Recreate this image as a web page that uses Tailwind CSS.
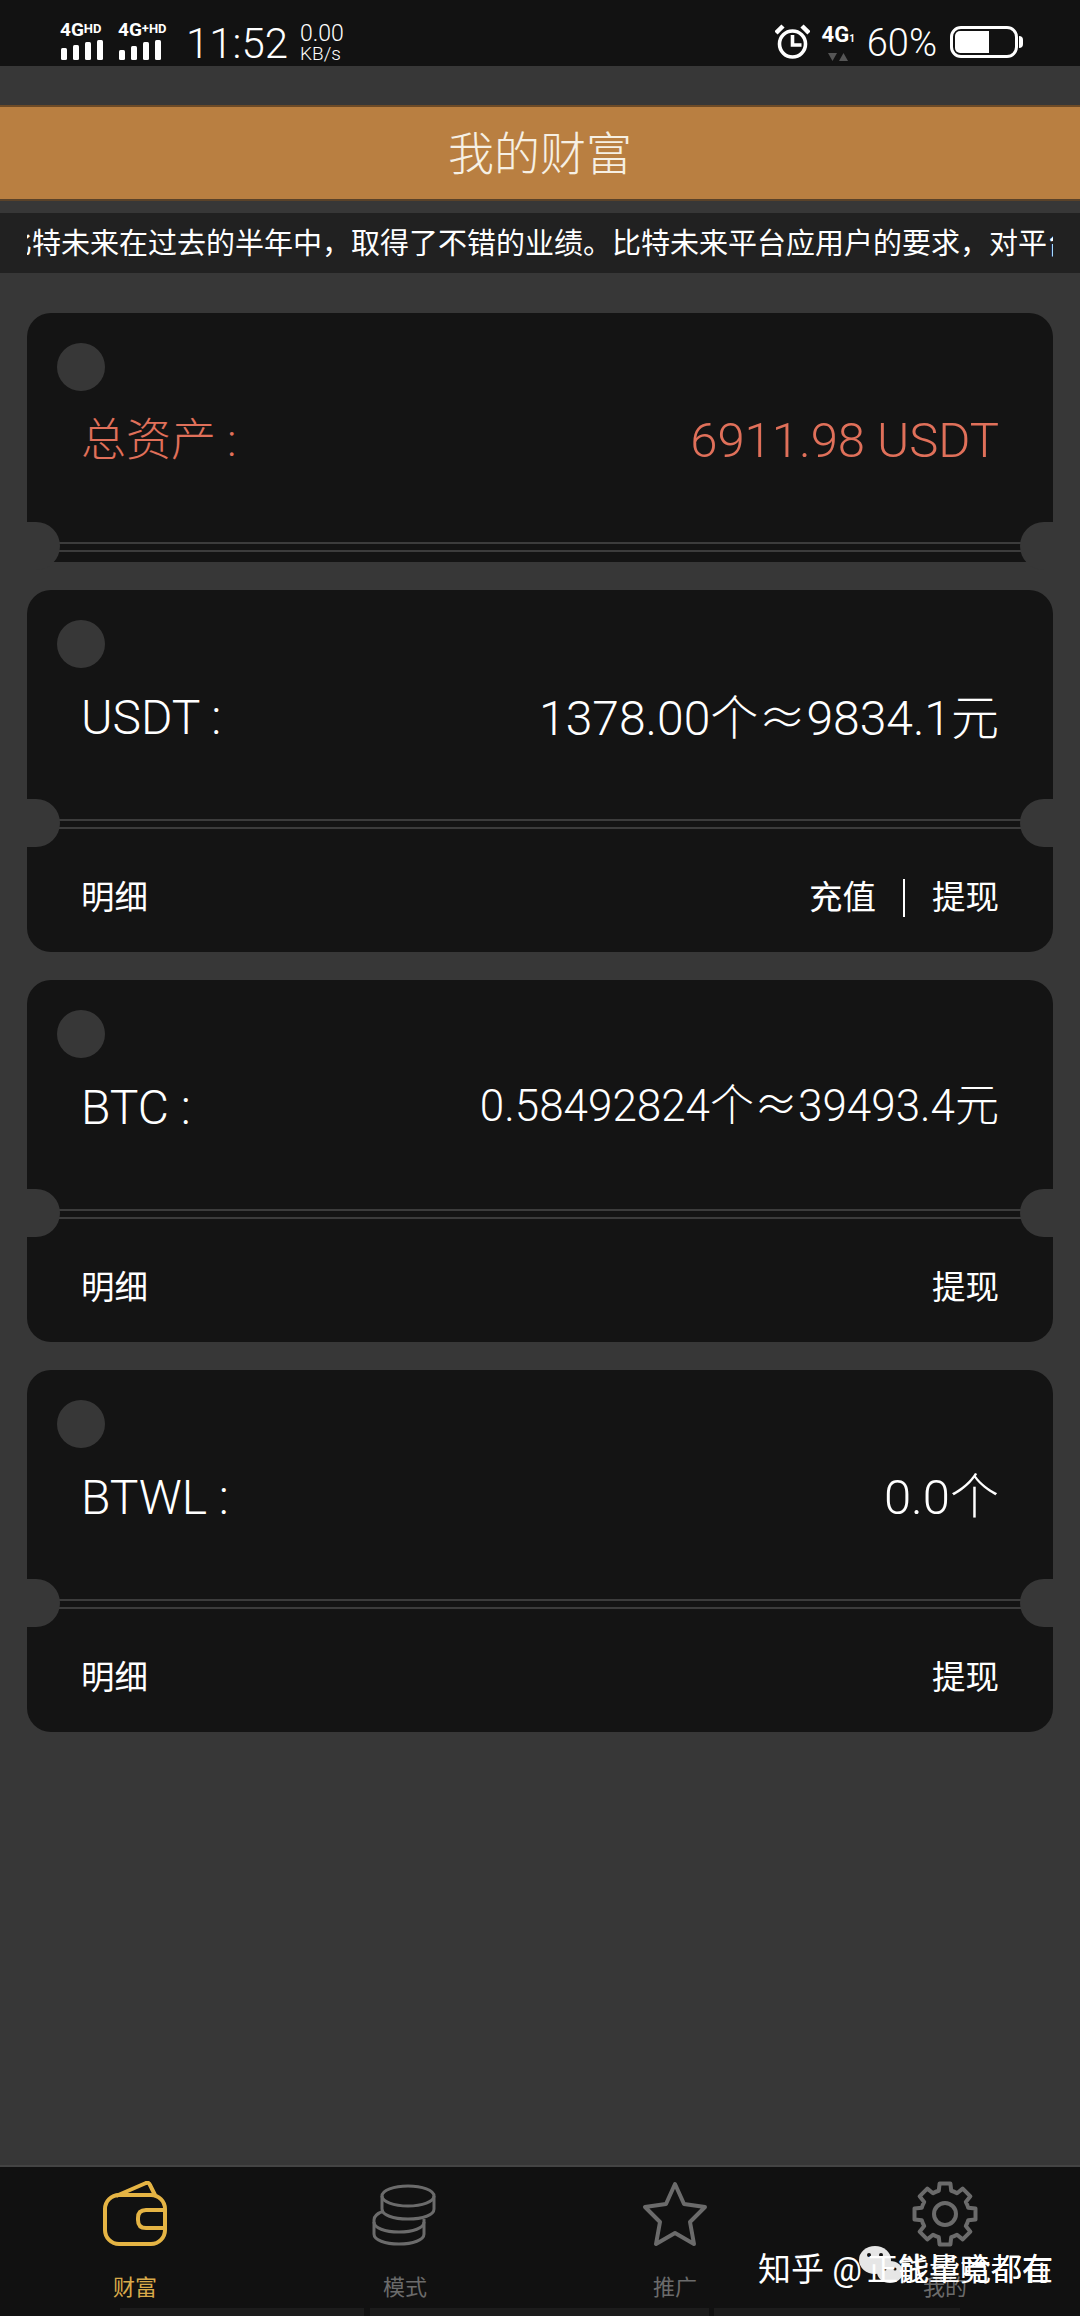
<!DOCTYPE html>
<html lang="zh-CN">
<head>
    <meta charset="UTF-8">
    <title>我的财富</title>
    <script src="https://cdn.jsdelivr.net/npm/@tailwindcss/browser@4"></script>
</head>
<body class="bg-[#373737] font-['Roboto','Noto_Sans_CJK_SC',sans-serif] text-white">
    <div class="relative flex flex-col h-[2316px] w-[1080px] overflow-hidden">
        <!-- Status bar -->
        <div class="flex justify-between h-[66px] bg-[#121212] pl-[60px] pr-[58px] shrink-0">
            <div class="flex items-start">
                <div class="flex flex-col w-[58px] pt-[20px]">
                    <span class="text-[19px] leading-[18px] font-bold whitespace-nowrap">4G<span class="text-[13px] align-[3px]">HD</span></span>
                    <svg class="mt-[1px]" width="44" height="20" viewBox="0 0 44 20" fill="#fff"><rect x="1" y="8" width="6" height="12" rx="1.5"/><rect x="13" y="5" width="6" height="15" rx="1.5"/><rect x="25" y="2" width="6" height="18" rx="1.5"/><rect x="37" y="0" width="6" height="20" rx="1.5"/></svg>
                </div>
                <div class="flex flex-col w-[68px] pt-[20px]">
                    <span class="text-[19px] leading-[18px] font-bold whitespace-nowrap">4G<span class="text-[13px] align-[3px]">+HD</span></span>
                    <svg class="mt-[1px]" width="44" height="20" viewBox="0 0 44 20" fill="#fff"><rect x="1" y="10" width="6" height="10" rx="1.5"/><rect x="13" y="6" width="6" height="14" rx="1.5"/><rect x="25" y="2" width="6" height="18" rx="1.5"/><rect x="37" y="0" width="6" height="20" rx="1.5"/></svg>
                </div>
                <span class="text-[42px] leading-[42px] font-light mt-[23px]">11:52</span>
                <div class="flex flex-col ml-[12px] mt-[24px]">
                    <span class="text-[23px] leading-[20px] font-light">0.00</span>
                    <span class="text-[19px] leading-[19px] font-light">KB/s</span>
                </div>
            </div>
            <div class="flex items-start">
                <svg class="mt-[24px]" width="35" height="35" viewBox="0 0 35 35" fill="none" stroke="#fff" stroke-width="3.6"><circle cx="17.5" cy="20" r="13"/><path d="M17.5 11v10h9"/><path d="M1 9l7-7M34 9l-7-7" stroke-width="4.5"/></svg>
                <div class="flex flex-col items-center ml-[11px] w-[35px] mt-[24px]">
                    <span class="text-[22px] leading-[22px] font-bold">4G<span class="text-[10px]">1</span></span>
                    <svg class="mt-[3px]" width="20" height="8" viewBox="0 0 20 8" fill="#555"><path d="M0 0h9l-4.5 8zM11 8h9l-4.5-8z"/></svg>
                </div>
                <span class="text-[38px] leading-[38px] font-light ml-[11px] mt-[24px]">60%</span>
                <div class="relative w-[68px] h-[32px] ml-[13px] mt-[26px] border-[3px] border-white rounded-[11px] p-[2px] mr-[4px]">
                    <div class="w-[34px] h-full bg-white rounded-l-[5px]"></div>
                    <div class="absolute right-[-8px] top-[7px] w-[4px] h-[12px] bg-white rounded-r"></div>
                </div>
            </div>
        </div>

        <!-- Title -->
        <div class="flex items-center justify-center h-[96px] mt-[39px] bg-[#b97f41] border-y-2 border-t-[#6d4a26] border-b-[#5a4229] shrink-0">
            <h1 class="text-[46px] font-light text-[#f6f0e4] leading-none mt-[2px]">我的财富</h1>
        </div>

        <!-- Notice -->
        <div class="flex items-center h-[60px] mt-[12px] bg-[#212121] shrink-0">
            <div class="mx-[27px] overflow-hidden w-full">
                <p class="text-[29px] leading-none mt-[3px] ml-[-24px] whitespace-nowrap">比特未来在过去的半年中，取得了不错的业绩。比特未来平台应用户的要求，对平台</p>
            </div>
        </div>

        <!-- Cards -->
        <div class="flex flex-col gap-[28px] px-[27px] pt-[40px]">
            <div class="relative h-[249px] bg-[#141414] rounded-t-[24px]">
                <div class="absolute left-[30px] top-[30px] w-[48px] h-[48px] rounded-full bg-[#373737]"></div>
                <div class="flex items-center justify-between h-[256px] px-[54px] font-light text-[#e0705a]">
                    <span class="text-[45px]">总资产 :</span>
                    <span class="text-[49px]">6911.98 USDT</span>
                </div>
                <div class="absolute left-[32px] right-[32px] top-[229px] h-[10px] border-y-2 border-[#3c3c3c]"></div>
                <div class="absolute left-[-27px] top-[209px] w-[60px] h-[48px] rounded-r-full bg-[#373737]"></div>
                <div class="absolute right-[-27px] top-[209px] w-[60px] h-[48px] rounded-l-full bg-[#373737]"></div>
            </div>

            <div class="relative h-[362px] bg-[#141414] rounded-[24px]">
                <div class="absolute left-[30px] top-[30px] w-[48px] h-[48px] rounded-full bg-[#373737]"></div>
                <div class="flex items-center justify-between h-[256px] px-[54px] text-[48px] font-light">
                    <span>USDT :</span>
                    <span class="mt-[-3px]">1378.00个<span class="font-['Noto_Sans_CJK_SC']">≈</span>9834.1元</span>
                </div>
                <div class="absolute left-[32px] right-[32px] top-[229px] h-[10px] border-y-2 border-[#3c3c3c]"></div>
                <div class="absolute left-[-27px] top-[209px] w-[60px] h-[48px] rounded-r-full bg-[#373737]"></div>
                <div class="absolute right-[-27px] top-[209px] w-[60px] h-[48px] rounded-l-full bg-[#373737]"></div>
                <div class="flex items-center justify-between px-[54px] pt-[27px] text-[33.5px]">
                    <span>明细</span>
                    <div class="flex items-center">
                        <span>充值</span>
                        <span class="w-[2px] h-[38px] bg-white mx-[27px]"></span>
                        <span>提现</span>
                    </div>
                </div>
            </div>

            <div class="relative h-[362px] bg-[#141414] rounded-[24px]">
                <div class="absolute left-[30px] top-[30px] w-[48px] h-[48px] rounded-full bg-[#373737]"></div>
                <div class="flex items-center justify-between h-[256px] px-[54px] text-[48px] font-light">
                    <span>BTC :</span>
                    <span class="text-[44px] mt-[-9px]">0.58492824个<span class="font-['Noto_Sans_CJK_SC']">≈</span>39493.4元</span>
                </div>
                <div class="absolute left-[32px] right-[32px] top-[229px] h-[10px] border-y-2 border-[#3c3c3c]"></div>
                <div class="absolute left-[-27px] top-[209px] w-[60px] h-[48px] rounded-r-full bg-[#373737]"></div>
                <div class="absolute right-[-27px] top-[209px] w-[60px] h-[48px] rounded-l-full bg-[#373737]"></div>
                <div class="flex items-center justify-between px-[54px] pt-[27px] text-[33.5px]">
                    <span>明细</span>
                    <span>提现</span>
                </div>
            </div>

            <div class="relative h-[362px] bg-[#141414] rounded-[24px]">
                <div class="absolute left-[30px] top-[30px] w-[48px] h-[48px] rounded-full bg-[#373737]"></div>
                <div class="flex items-center justify-between h-[256px] px-[54px] text-[48px] font-light">
                    <span>BTWL :</span>
                    <span class="text-[49px]">0.0个</span>
                </div>
                <div class="absolute left-[32px] right-[32px] top-[229px] h-[10px] border-y-2 border-[#3c3c3c]"></div>
                <div class="absolute left-[-27px] top-[209px] w-[60px] h-[48px] rounded-r-full bg-[#373737]"></div>
                <div class="absolute right-[-27px] top-[209px] w-[60px] h-[48px] rounded-l-full bg-[#373737]"></div>
                <div class="flex items-center justify-between px-[54px] pt-[27px] text-[33.5px]">
                    <span>明细</span>
                    <span>提现</span>
                </div>
            </div>
        </div>

        <!-- Tab bar -->
        <nav class="relative mt-auto grid grid-cols-4 h-[151px] bg-[#111111] border-t-2 border-[#444444] text-[22px] text-[#6b6b6b]">
            <div class="flex flex-col items-center pt-[14px]">
                <svg class="ml-[-1px]" width="66" height="66" viewBox="0 0 66 66" fill="none" stroke="#e5b444" stroke-width="4" stroke-linejoin="round">
                    <rect x="3" y="14" width="60" height="49" rx="14"/>
                    <path d="M14 15l30-13q3-1 4 2l5 10"/>
                    <path d="M63 29H44q-8 0-8 8v2q0 8 8 8h19"/>
                </svg>
                <span class="mt-[30px] leading-none text-[#d9aa4a]">财富</span>
            </div>
            <div class="flex flex-col items-center pt-[14px]">
                <svg width="66" height="66" viewBox="0 0 66 66" fill="none" stroke="#6b6b6b" stroke-width="3">
                    <ellipse cx="36" cy="15" rx="26" ry="10"/>
                    <path d="M10 15v13c0 6 11 10 26 10s26-4 26-10V15"/>
                    <path d="M12 30c-6 2-10 5-10 9v14c0 6 11 10 25 10s25-4 25-10V38"/>
                    <path d="M2 41c0 6 11 10 25 10s25-4 25-10"/>
                </svg>
                <span class="mt-[30px] leading-none">模式</span>
            </div>
            <div class="flex flex-col items-center pt-[14px]">
                <svg width="66" height="66" viewBox="0 0 66 66" fill="none" stroke="#6b6b6b" stroke-width="4" stroke-linejoin="round">
                    <path d="M33 3l9 20 21 3-15 15 4 22-19-11-19 11 4-22L3 26l21-3z"/>
                </svg>
                <span class="mt-[30px] leading-none">推广</span>
            </div>
            <div class="flex flex-col items-center pt-[14px]">
                <svg width="66" height="66" viewBox="0 0 66 66" fill="none" stroke="#6b6b6b" stroke-width="4" stroke-linejoin="round">
                    <circle cx="33" cy="33" r="11"/>
                    <path d="M26.8 9.8L27.6 2.5H38.4L39.2 9.8A24 24 0 0 1 45 12.2L50.7 7.6L58.4 15.3L53.8 21A24 24 0 0 1 56.2 26.8L63.5 27.6V38.4L56.2 39.2A24 24 0 0 1 53.8 45L58.4 50.7L50.7 58.4L45 53.8A24 24 0 0 1 39.2 56.2L38.4 63.5H27.6L26.8 56.2A24 24 0 0 1 21 53.8L15.3 58.4L7.6 50.7L12.2 45A24 24 0 0 1 9.8 39.2L2.5 38.4V27.6L9.8 26.8A24 24 0 0 1 12.2 21L7.6 15.3L15.3 7.6L21 12.2A24 24 0 0 1 26.8 9.8Z"/>
                </svg>
                <span class="mt-[30px] leading-none">我的</span>
            </div>
            <div class="absolute left-[120px] bottom-0 w-[244px] h-[8px] bg-[#1c1c1c]"></div>
            <div class="absolute left-[370px] bottom-0 w-[339px] h-[8px] bg-[#1c1c1c]"></div>
            <div class="absolute left-[714px] bottom-0 w-[246px] h-[8px] bg-[#1c1c1c]"></div>
        </nav>

        <!-- Watermark -->
        <div class="absolute left-[758px] top-[2250px] text-[33px] leading-[40px] whitespace-nowrap">知乎 @</div>
        <svg class="absolute left-[858px] top-[2244px]" width="46" height="44" viewBox="0 0 46 44" fill="#e6e6e6">
            <ellipse cx="17" cy="16" rx="16" ry="14"/>
            <ellipse cx="32" cy="28" rx="13" ry="11"/>
            <circle cx="11" cy="11" r="2" fill="#111"/><circle cx="23" cy="11" r="2" fill="#111"/>
            <circle cx="27" cy="25" r="1.5" fill="#111"/><circle cx="37" cy="25" r="1.5" fill="#111"/>
        </svg>
        <div class="absolute left-[867px] top-[2250px] text-[31px] leading-[40px] whitespace-nowrap">正能量哈都有</div>
        <div class="absolute left-[898px] top-[2250px] text-[31px] leading-[40px] whitespace-nowrap">钱毕竟都在</div>
    </div>
</body>
</html>
